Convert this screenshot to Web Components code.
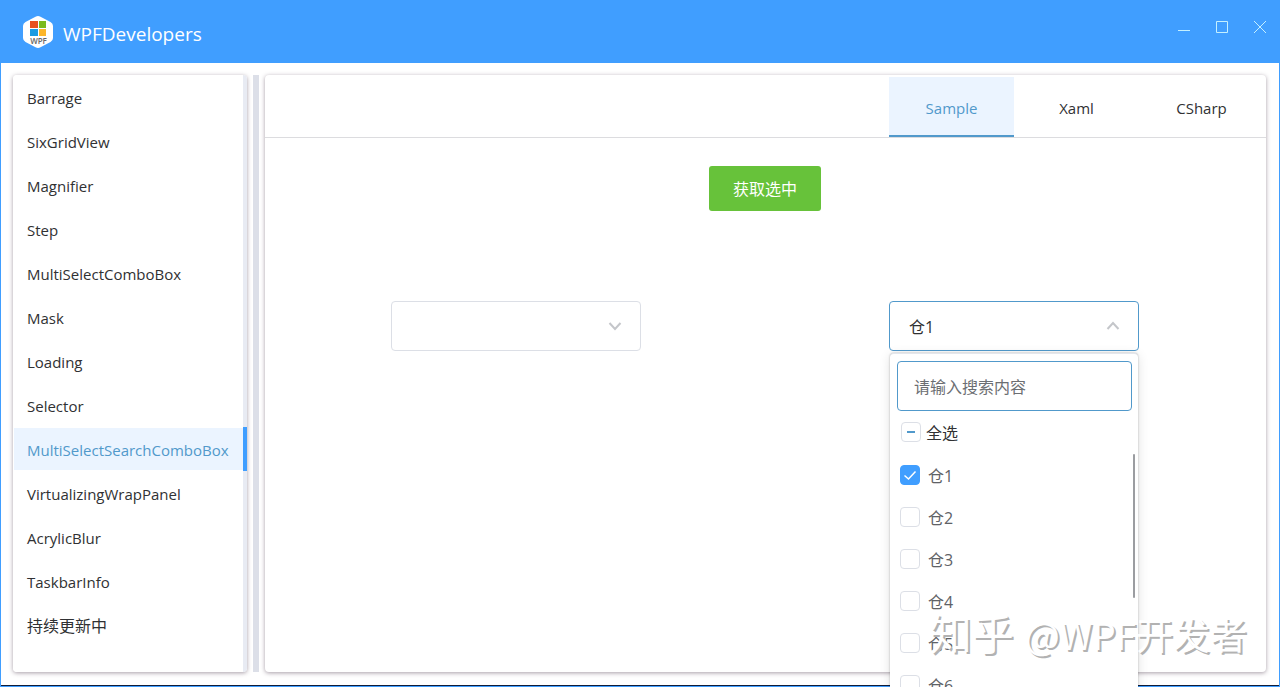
<!DOCTYPE html>
<html lang="zh-CN">
<head>
<meta charset="utf-8">
<title>WPFDevelopers</title>
<style>
    body {
        margin: 0;
        overflow: hidden;
        background: #fff;
        color: #303133;
        font-family: "Open Sans", "Noto Sans CJK SC", sans-serif;
        font-size: 15px;
        --primary: #409eff;
        --primary-line: #5199cb;
        --primary-light: #ebf4ff;
        --border: #dcdfe6;
    }
</style>
</head>
<body>
<app-window>
    <title-bar slot="title">WPFDevelopers</title-bar>
    <side-nav slot="nav">
        <nav-item>Barrage</nav-item>
        <nav-item>SixGridView</nav-item>
        <nav-item>Magnifier</nav-item>
        <nav-item>Step</nav-item>
        <nav-item>MultiSelectComboBox</nav-item>
        <nav-item>Mask</nav-item>
        <nav-item>Loading</nav-item>
        <nav-item>Selector</nav-item>
        <nav-item selected>MultiSelectSearchComboBox</nav-item>
        <nav-item>VirtualizingWrapPanel</nav-item>
        <nav-item>AcrylicBlur</nav-item>
        <nav-item>TaskbarInfo</nav-item>
        <nav-item cjk>持续更新中</nav-item>
    </side-nav>
    <tab-panel>
        <tab-button slot="tabs" selected>Sample</tab-button>
        <tab-button slot="tabs">Xaml</tab-button>
        <tab-button slot="tabs">CSharp</tab-button>
        <sample-view>
            <success-button slot="action">获取选中</success-button>
            <search-combo label="仓库"></search-combo>
            <search-combo label="已选仓库" value="仓1" open>
                <check-row state="mixed" heading>全选</check-row>
                <check-row slot="items" state="checked">仓1</check-row>
                <check-row slot="items">仓2</check-row>
                <check-row slot="items">仓3</check-row>
                <check-row slot="items">仓4</check-row>
                <check-row slot="items">仓5</check-row>
                <check-row slot="items">仓6</check-row>
            </search-combo>
        </sample-view>
    </tab-panel>
    <water-mark slot="overlay">知乎 <span>@WPF开发者</span></water-mark>
</app-window>

<script>
class BaseElement extends HTMLElement {
    constructor() {
        super();
        this.attachShadow({ mode: 'open' });
    }

    connectedCallback() {
        this.shadowRoot.innerHTML = this.render();
        this.addEventListeners();
    }

    addEventListeners() {}
}

class AppWindow extends BaseElement {
    render() {
        return `
            <style>
                :host {
                    display: flex;
                    flex-direction: column;
                    position: relative;
                    box-sizing: border-box;
                    height: 100vh;
                    border: 1px solid var(--primary);
                    border-top: 0;
                }
                .body {
                    flex: 1;
                    min-height: 0;
                    display: grid;
                    grid-template-columns: 234px 6px minmax(0, 1fr);
                    grid-template-rows: minmax(0, 1fr);
                    gap: 6px;
                    padding: 12px 13px 13px 12px;
                    border-bottom: 1px solid #101c38;
                }
                .splitter {
                    background: #dcdfe8;
                }
            </style>
            <slot name="title"></slot>
            <div class="body">
                <slot name="nav"></slot>
                <div class="splitter" role="separator"></div>
                <slot></slot>
            </div>
            <slot name="overlay"></slot>
        `;
    }
}

class TitleBar extends BaseElement {
    render() {
        return `
            <style>
                :host {
                    display: flex;
                    align-items: center;
                    height: 63px;
                    padding-left: 22px;
                    margin: 0 -1px;
                    background: var(--primary);
                    color: #fff;
                }
                .logo {
                    width: 32px;
                    height: 34px;
                }
                h1 {
                    flex: 1;
                    margin: 0;
                    padding: 4px 0 0 9px;
                    font-size: 19px;
                    line-height: 26px;
                    font-weight: 400;
                }
                .controls {
                    display: flex;
                    align-self: flex-start;
                    padding-right: 1px;
                }
                button {
                    display: grid;
                    place-items: center;
                    width: 38px;
                    height: 54px;
                    padding: 0;
                    border: 0;
                    background: none;
                    color: #c4f0ff;
                    cursor: pointer;
                }
                button svg {
                    width: 14px;
                    height: 14px;
                    fill: none;
                    stroke: currentColor;
                }
            </style>
            <svg class="logo" viewBox="0 0 32 34" aria-hidden="true">
                <path d="M13.5 1.8Q16 .4 18.5 1.8L28.500 7Q31 8.400 31 11V23Q31 25.600 28.500 27L18.500 32.200Q16 33.600 13.500 32.200L3.500 27Q1 25.600 1 23V11Q1 8.400 3.500 7Z" fill="#fff"/>
                <path d="M8 6h8v7H8z" fill="#e8501f"/>
                <path d="M17 6h7v7h-7z" fill="#7cbb1d"/>
                <path d="M8 14h8v7H8z" fill="#1b9be2"/>
                <path d="M17 14h7v7h-7z" fill="#fcb62b"/>
                <text x="16.500" y="29" text-anchor="middle" font-family="Open Sans, sans-serif" font-size="8" font-weight="600" fill="#666">WPF</text>
            </svg>
            <h1><slot></slot></h1>
            <div class="controls">
                <button aria-label="Minimize"><svg viewBox="0 0 14 14"><path d="M1 10.500h12"/></svg></button>
                <button aria-label="Maximize"><svg viewBox="0 0 14 14"><path d="M1.500 1.500h11v11h-11z"/></svg></button>
                <button aria-label="Close"><svg viewBox="0 0 14 14"><path d="M1 1l12 12M13 1L1 13"/></svg></button>
            </div>
        `;
    }
}

class SideNav extends BaseElement {
    render() {
        return `
            <style>
                :host {
                    display: block;
                    border-radius: 4px;
                    background: linear-gradient(to left, #e8ebf3 4px, #fff 4px);
                    box-shadow: 0 1px 4px rgba(80, 60, 80, .5);
                    overflow: hidden;
                }
            </style>
            <nav><slot></slot></nav>
        `;
    }
}

class NavItem extends BaseElement {
    render() {
        return `
            <style>
                :host {
                    display: block;
                }
                a {
                    display: block;
                    box-sizing: border-box;
                    height: 44px;
                    padding-left: 14px;
                    border-right: 4px solid transparent;
                    color: inherit;
                    line-height: 46px;
                    text-decoration: none;
                    white-space: nowrap;
                }
                :host([cjk]) a {
                    font-size: 16px;
                }
                :host([selected]) a {
                    border-right-color: var(--primary);
                    background: linear-gradient(var(--primary-light), var(--primary-light)) 1px 1px / 100% 42px no-repeat padding-box;
                    color: var(--primary-line);
                }
            </style>
            <a href="#"><slot></slot></a>
        `;
    }
}

class TabPanel extends BaseElement {
    render() {
        return `
            <style>
                :host {
                    display: flex;
                    flex-direction: column;
                    border-radius: 4px;
                    background: #fff;
                    box-shadow: 0 1px 4px rgba(80, 60, 80, .5);
                }
                .tabs {
                    display: flex;
                    justify-content: flex-end;
                    padding: 2px 2px 0 0;
                    border-bottom: 1px solid #dcdcdf;
                }
            </style>
            <div class="tabs" role="tablist"><slot name="tabs"></slot></div>
            <slot></slot>
        `;
    }
}

class TabButton extends BaseElement {
    render() {
        return `
            <style>
                :host {
                    display: block;
                }
                button {
                    display: block;
                    width: 125px;
                    height: 60px;
                    padding: 4px 0 0;
                    border: 0;
                    border-bottom: 2px solid transparent;
                    background: none;
                    color: inherit;
                    font: inherit;
                    cursor: pointer;
                }
                :host([selected]) button {
                    border-bottom-color: var(--primary-line);
                    background: var(--primary-light);
                    color: var(--primary-line);
                }
            </style>
            <button role="tab" aria-selected="${this.hasAttribute('selected')}"><slot></slot></button>
        `;
    }
}

class SampleView extends BaseElement {
    render() {
        return `
            <style>
                :host {
                    display: grid;
                    grid-template-columns: 1fr 1fr;
                    justify-items: center;
                    row-gap: 90px;
                    padding: 28px 3px 0 2px;
                }
                .action {
                    grid-column: 1 / -1;
                }
            </style>
            <div class="action"><slot name="action"></slot></div>
            <slot></slot>
        `;
    }
}

class SuccessButton extends BaseElement {
    render() {
        return `
            <style>
                :host {
                    display: block;
                }
                button {
                    display: block;
                    height: 45px;
                    padding: 0 24px 2px;
                    border: 0;
                    border-radius: 3px;
                    background: #67c23a;
                    color: #fff;
                    font: inherit;
                    font-size: 16px;
                    cursor: pointer;
                }
            </style>
            <button><slot></slot></button>
        `;
    }
}

class SearchCombo extends BaseElement {
    render() {
        const open = this.hasAttribute('open');
        const value = this.getAttribute('value') || '';
        return `
            <style>
                :host {
                    display: block;
                    position: relative;
                    width: 250px;
                    font-size: 16px;
                }
                .face {
                    display: grid;
                    align-items: center;
                }
                .face > * {
                    grid-area: 1 / 1;
                }
                select {
                    appearance: none;
                    box-sizing: border-box;
                    width: 100%;
                    height: 50px;
                    padding: 2px 40px 0 19px;
                    border: 1px solid var(--border);
                    border-radius: 4px;
                    background: #fff;
                    color: inherit;
                    font: inherit;
                    outline: none;
                }
                svg {
                    justify-self: end;
                    width: 14px;
                    height: 14px;
                    margin-right: 19px;
                    fill: none;
                    stroke: #c4c6ca;
                    stroke-width: 2;
                    pointer-events: none;
                }
                .popup {
                    display: none;
                    position: absolute;
                    top: 52px;
                    left: 1px;
                    right: 1px;
                    padding: 7px 6px 8px 7px;
                    border-radius: 4px;
                    border-top: 1px solid #e4e7ed;
                    background: #fff;
                    box-shadow: 0 0 2px rgba(0, 0, 0, .3), 0 2px 12px rgba(0, 0, 0, .12);
                }
                :host([open]) select {
                    border-color: var(--primary-line);
                }
                :host([open]) svg {
                    transform: rotate(180deg);
                }
                :host([open]) .popup {
                    display: block;
                }
                input {
                    display: block;
                    box-sizing: border-box;
                    width: 100%;
                    height: 50px;
                    padding: 2px 16px 0;
                    border: 1px solid var(--primary-line);
                    border-radius: 4px;
                    background: #fff;
                    color: inherit;
                    font: inherit;
                    outline: none;
                }
                input::placeholder {
                    color: #6c6e72;
                    opacity: 1;
                }
                .list {
                    display: grid;
                    grid-template-columns: 1fr 2px;
                    align-items: start;
                    margin-right: -3px;
                    padding-left: 3px;
                }
                .thumb {
                    height: 144px;
                    border-radius: 1px;
                    background: #9b9da1;
                }
            </style>
            <div class="face">
                <select aria-label="${this.getAttribute('label')}" aria-expanded="${open}">
                    <option>${value}</option>
                </select>
                <svg viewBox="0 0 14 14" aria-hidden="true"><path d="M1.500 4L7 10L12.500 4"/></svg>
            </div>
            <div class="popup">
                <input type="text" placeholder="请输入搜索内容" aria-label="请输入搜索内容">
                <slot></slot>
                <div class="list">
                    <div><slot name="items"></slot></div>
                    <div class="thumb"></div>
                </div>
            </div>
        `;
    }

    addEventListeners() {
        // the popup replaces the native option list
        const select = this.shadowRoot.querySelector('select');
        select.addEventListener('mousedown', (e) => {
            e.preventDefault();
            select.setAttribute('aria-expanded', this.toggleAttribute('open'));
        });
    }
}

class CheckRow extends BaseElement {
    render() {
        const state = this.getAttribute('state');
        return `
            <style>
                :host {
                    display: block;
                    color: #606266;
                }
                label {
                    display: flex;
                    align-items: center;
                    gap: 8px;
                    height: 42px;
                }
                :host([heading]) {
                    color: #303133;
                }
                :host([heading]) label {
                    gap: 5px;
                    height: 42px;
                    padding: 0 0 1px 4px;
                }
                .box {
                    display: grid;
                }
                .box > * {
                    grid-area: 1 / 1;
                }
                input {
                    appearance: none;
                    box-sizing: border-box;
                    width: 20px;
                    height: 20px;
                    margin: 0;
                    border: 1px solid var(--border);
                    border-radius: 4px;
                    background: #fff;
                }
                input:checked {
                    border-color: var(--primary);
                    background: var(--primary);
                }
                svg {
                    display: none;
                    width: 20px;
                    height: 20px;
                    fill: none;
                    pointer-events: none;
                }
                input:checked ~ .tick,
                input:indeterminate ~ .dash {
                    display: block;
                }
                .text {
                    padding-top: 2px;
                    line-height: 24px;
                }
            </style>
            <label>
                <span class="box">
                    <input type="checkbox" ${state === 'checked' ? 'checked' : ''}>
                    <svg class="tick" viewBox="0 0 20 20"><path d="M4.500 10.500L8.500 14L15.500 6.500" stroke="#fff" stroke-width="1.500"/></svg>
                    <svg class="dash" viewBox="0 0 20 20"><path d="M6 10h8" stroke="#5199cb" stroke-width="2"/></svg>
                </span>
                <span class="text"><slot></slot></span>
            </label>
        `;
    }

    addEventListeners() {
        this.shadowRoot.querySelector('input').indeterminate = this.getAttribute('state') === 'mixed';
    }
}

class WaterMark extends BaseElement {
    render() {
        return `
            <style>
                :host {
                    position: absolute;
                    right: 32px;
                    bottom: 24px;
                    color: #fff;
                    font-size: 42px;
                    line-height: 56px;
                    white-space: nowrap;
                    text-shadow: 2px 2px 0 #b2b2b2;
                    pointer-events: none;
                }
                ::slotted(span) {
                    font-size: 37px;
                    font-family: "Noto Sans CJK SC", sans-serif;
                }
            </style>
            <slot></slot>
        `;
    }
}

customElements.define('app-window', AppWindow);
customElements.define('title-bar', TitleBar);
customElements.define('side-nav', SideNav);
customElements.define('nav-item', NavItem);
customElements.define('tab-panel', TabPanel);
customElements.define('tab-button', TabButton);
customElements.define('sample-view', SampleView);
customElements.define('success-button', SuccessButton);
customElements.define('search-combo', SearchCombo);
customElements.define('check-row', CheckRow);
customElements.define('water-mark', WaterMark);
</script>
</body>
</html>
